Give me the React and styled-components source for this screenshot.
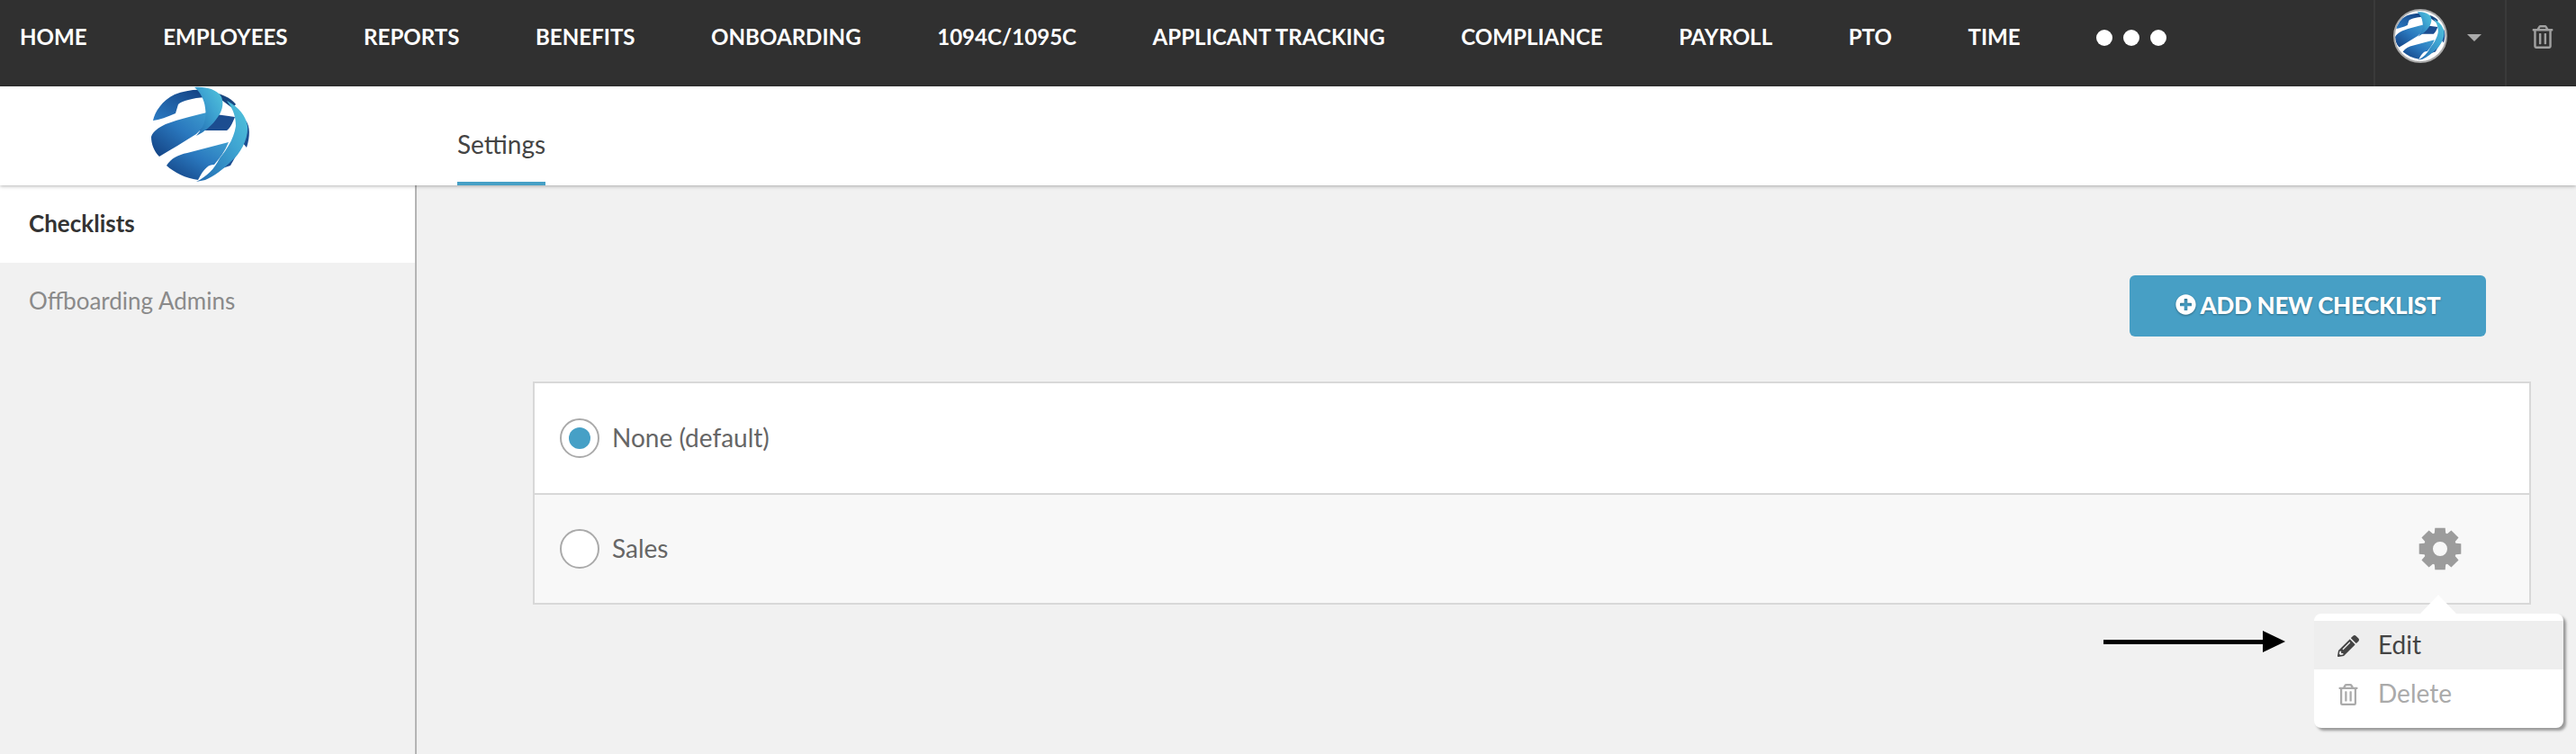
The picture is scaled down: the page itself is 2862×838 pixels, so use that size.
import React from 'react'
import styled, { createGlobalStyle } from 'styled-components'
import { FaPlusCircle, FaPencilAlt, FaRegTrashAlt } from 'react-icons/fa'

const navItems = ['HOME', 'EMPLOYEES', 'REPORTS', 'BENEFITS', 'ONBOARDING', '1094C/1095C', 'APPLICANT TRACKING', 'COMPLIANCE', 'PAYROLL', 'PTO', 'TIME']

// eight toothed cog, same shape as the old font-awesome one
const cogPath = () => {
  const pts = []
  for (let i = 0; i < 8; i++) {
    const a = (i * Math.PI) / 4 - Math.PI / 2
    const at = (r, d) => `${(24 + r * Math.cos(a + d)).toFixed(2)} ${(24 + r * Math.sin(a + d)).toFixed(2)}`
    pts.push(at(18.5, -0.34), at(24, -0.24), at(24, 0.24), at(18.5, 0.34))
  }
  return `M${pts.join('L')}Z`
}

const Globe = ({ id }) => (
  <svg viewBox="0 0 110 107" width="100%" height="100%">
    <defs>
      <linearGradient id={`${id}-band`} x1="0" y1="1" x2="1" y2="0">
        <stop offset="0" stopColor="#123f80" />
        <stop offset="0.55" stopColor="#2a78be" />
        <stop offset="1" stopColor="#3f9fd0" />
      </linearGradient>
      <linearGradient id={`${id}-top`} x1="0" y1="1" x2="1" y2="0">
        <stop offset="0" stopColor="#2c7cc4" />
        <stop offset="1" stopColor="#123f80" />
      </linearGradient>
      <linearGradient id={`${id}-ribbon`} x1="0" y1="1" x2="1" y2="0">
        <stop offset="0" stopColor="#2069b0" />
        <stop offset="0.6" stopColor="#3fa5d2" />
        <stop offset="1" stopColor="#52c6dc" />
      </linearGradient>
    </defs>
    <path d="M2 38C4 28 12 16 26 9C36 5 48 3 59 4L60 12C46 13 34 16 30 20L27 30C18 34 9 37 2 38Z" fill={`url(#${id}-top)`} />
    <path d="M75 8C84 11 90 15 94 20L90 24L78 15Z" fill="#17457f" />
    <path d="M64 30L93 34C90 42 87 47 84 49L53 49C60 44 63 38 64 30Z" fill="#1c4d90" />
    <path d="M105 38C110 44 110 56 106 68L101 62C104 54 105 46 105 38Z" fill="#1c4d90" />
    <path d="M82 78L96 74L88 88L76 92Z" fill="#1c4d90" />
    <path d="M0 56C2 50 8 46 16 42C32 36 50 32 66 28C64 38 58 46 50 53C36 62 22 70 9 78C3 72 0 64 0 56Z" fill={`url(#${id}-band)`} />
    <path d="M17 88C22 80 30 76 40 74L86 62C82 72 76 80 70 87C62 86 56 96 52 104C38 102 26 96 17 88Z" fill={`url(#${id}-band)`} />
    <path d="M48 1C62 0 72 4 77 10C81 16 80 26 74 34C68 43 60 50 50 55C58 46 62 36 60 24C59 14 54 6 48 1Z" fill={`url(#${id}-ribbon)`} />
    <path d="M84 16C96 22 105 32 107 44C108 58 100 74 88 84C80 92 70 100 60 104L50 106C62 100 70 92 76 80C84 70 92 58 94 44C94 32 90 24 84 16Z" fill={`url(#${id}-ribbon)`} />
  </svg>
)

const App = () => (
  <Page>
    <GlobalStyle />
    <TopBar>
      <Nav>
        {navItems.map((item) => <NavItem key={item}>{item}</NavItem>)}
        <Dots><Dot /><Dot /><Dot /></Dots>
      </Nav>
      <UserArea>
        <Avatar><Globe id="avatar" /></Avatar>
        <Caret />
      </UserArea>
      <TrashArea><FaRegTrashAlt /></TrashArea>
    </TopBar>

    <SubHeader>
      <LogoSlot><Logo><Globe id="logo" /></Logo></LogoSlot>
      <Tab>Settings</Tab>
    </SubHeader>

    <Content>
      <Sidebar>
        <SideItem $active>Checklists</SideItem>
        <SideItem>Offboarding Admins</SideItem>
      </Sidebar>

      <Main>
        <Actions>
          <AddButton><FaPlusCircle />ADD NEW CHECKLIST</AddButton>
        </Actions>
        <Card>
          <Row>
            <Radio $checked />
            <RowLabel>None (default)</RowLabel>
          </Row>
          <Row $alt>
            <Radio />
            <RowLabel>Sales</RowLabel>
            <Cog viewBox="0 0 48 48">
              <path fillRule="evenodd" d={`${cogPath()}M24 16a8 8 0 1 0 0 16a8 8 0 1 0 0-16Z`} />
            </Cog>
            <Pointer>
              <Line />
              <Head />
            </Pointer>
            <Menu>
              <MenuItem $hover><FaPencilAlt />Edit</MenuItem>
              <MenuItem $disabled><FaRegTrashAlt />Delete</MenuItem>
            </Menu>
          </Row>
        </Card>
      </Main>
    </Content>
  </Page>
)

const GlobalStyle = createGlobalStyle`
  html, body {
    margin: 0;
    padding: 0;
    height: 100%;
    overflow: hidden;
    background: #f1f1f1;
    font-family: Lato, "Open Sans", sans-serif;
  }
  * { box-sizing: border-box; }
`

const Page = styled.div`
  display: flex;
  flex-direction: column;
  height: 838px;
  overflow: hidden;
`

const TopBar = styled.header`
  display: flex;
  height: 96px;
  flex-shrink: 0;
  background: #303030;
`

const Nav = styled.nav`
  display: flex;
  flex: 1;
  align-items: flex-start;
  padding: 26px 0 0 22px;
  gap: 84.5px;
`

const NavItem = styled.a`
  color: #fff;
  font-size: 24.1px;
  font-weight: 700;
  line-height: 30px;
  white-space: nowrap;
`

const Dots = styled.div`
  display: flex;
  gap: 12px;
  padding-top: 7px;
`

const Dot = styled.span`
  width: 18px;
  height: 18px;
  border-radius: 50%;
  background: #fff;
`

const UserArea = styled.div`
  display: flex;
  width: 148px;
  padding: 10px 0 0 20px;
  border-left: 2px solid #3a3a3a;
  border-right: 2px solid #3a3a3a;
`

const Avatar = styled.div`
  width: 60px;
  height: 60px;
  border-radius: 50%;
  border: 2px solid #aaa;
  background: #fff;
  overflow: hidden;
`

const Caret = styled.span`
  width: 0;
  height: 0;
  margin: 28px 0 0 22px;
  border-left: 8px solid transparent;
  border-right: 8px solid transparent;
  border-top: 8px solid #aaa;
`

const TrashArea = styled.div`
  width: 77px;
  padding: 28px 0 0 27px;
  color: #a0a0a0;
  font-size: 26px;
  line-height: 0;
`

const SubHeader = styled.div`
  display: flex;
  height: 110px;
  flex-shrink: 0;
  background: #fff;
  box-shadow: 0 1px 4px rgba(0, 0, 0, 0.3);
  position: relative;
  z-index: 1;
`

const LogoSlot = styled.div`
  width: 508px;
  padding-left: 168px;
`

const Logo = styled.div`
  width: 110px;
  height: 107px;
`

const Tab = styled.div`
  display: flex;
  align-items: center;
  padding-top: 22px;
  height: 110px;
  border-bottom: 4px solid #46a0c6;
  color: #444;
  font-size: 28px;
`

const Content = styled.div`
  display: flex;
  flex: 1;
`

const Sidebar = styled.aside`
  width: 463px;
  flex-shrink: 0;
  border-right: 2px solid #b4b4b4;
`

const SideItem = styled.div`
  display: flex;
  align-items: center;
  height: 86px;
  padding: 0 0 3px 32px;
  font-size: 26px;
  background: ${(p) => (p.$active ? '#fff' : 'transparent')};
  color: ${(p) => (p.$active ? '#333' : '#8a8a8a')};
  font-weight: ${(p) => (p.$active ? 700 : 400)};
`

const Main = styled.main`
  flex: 1;
  padding: 100px 50px 0 129px;
`

const Actions = styled.div`
  display: flex;
  justify-content: flex-end;
  padding-right: 50px;
  margin-bottom: 50px;
`

const AddButton = styled.button`
  display: flex;
  align-items: center;
  justify-content: center;
  gap: 5px;
  width: 396px;
  height: 68px;
  padding: 0 0 3px;
  border: 0;
  border-radius: 6px;
  background: #479fc5;
  color: #fff;
  font-family: inherit;
  font-size: 26px;
  font-weight: 900;
  letter-spacing: -0.25px;
  text-shadow: 0 1px 2px rgba(0, 0, 0, 0.35);

  svg {
    font-size: 23px;
    filter: drop-shadow(0 1px 1px rgba(0, 0, 0, 0.35));
  }
`

const Card = styled.div`
  border: 2px solid #d8d8d8;
`

const Row = styled.div`
  display: flex;
  align-items: center;
  position: relative;
  height: 122px;
  padding: 0 28px;
  background: ${(p) => (p.$alt ? '#f8f8f8' : '#fff')};
  border-top: ${(p) => (p.$alt ? '2px solid #d8d8d8' : '0')};
`

const Radio = styled.span`
  display: flex;
  align-items: center;
  justify-content: center;
  width: 44px;
  height: 44px;
  border: 2px solid #aaa;
  border-radius: 50%;
  background: #fff;

  &::after {
    content: '';
    display: ${(p) => (p.$checked ? 'block' : 'none')};
    width: 24px;
    height: 24px;
    border-radius: 50%;
    background: #46a0c6;
  }
`

const RowLabel = styled.span`
  margin-left: 14px;
  padding-bottom: 3px;
  color: #666;
  font-size: 28px;
`

const Cog = styled.svg`
  width: 48px;
  height: 48px;
  margin-left: auto;
  margin-right: 47px;
  fill: #9c9c9c;
`

const Menu = styled.div`
  position: absolute;
  top: 132px;
  right: -38px;
  width: 277px;
  height: 127px;
  padding-top: 8px;
  background: #fff;
  border-radius: 8px;
  box-shadow: 3px 3px 3px #999;

  &::before {
    content: '';
    position: absolute;
    top: -21px;
    left: 118px;
    border-left: 20px solid transparent;
    border-right: 20px solid transparent;
    border-bottom: 21px solid #fff;
  }
`

const MenuItem = styled.div`
  display: flex;
  align-items: center;
  height: 54px;
  padding: 0 0 3px 26px;
  gap: 21px;
  font-size: 28px;
  background: ${(p) => (p.$hover ? '#eee' : 'transparent')};
  color: ${(p) => (p.$disabled ? '#aaa' : '#444')};

  svg {
    width: 24px;
    height: 24px;
    margin-top: 5px;
  }
`

const Pointer = styled.div`
  display: flex;
  align-items: center;
  position: absolute;
  top: 151px;
  right: 271px;
  width: 202px;
`

const Line = styled.span`
  flex: 1;
  height: 5px;
  background: #000;
`

const Head = styled.span`
  border-left: 25px solid #000;
  border-top: 12.5px solid transparent;
  border-bottom: 12.5px solid transparent;
`

export default App
